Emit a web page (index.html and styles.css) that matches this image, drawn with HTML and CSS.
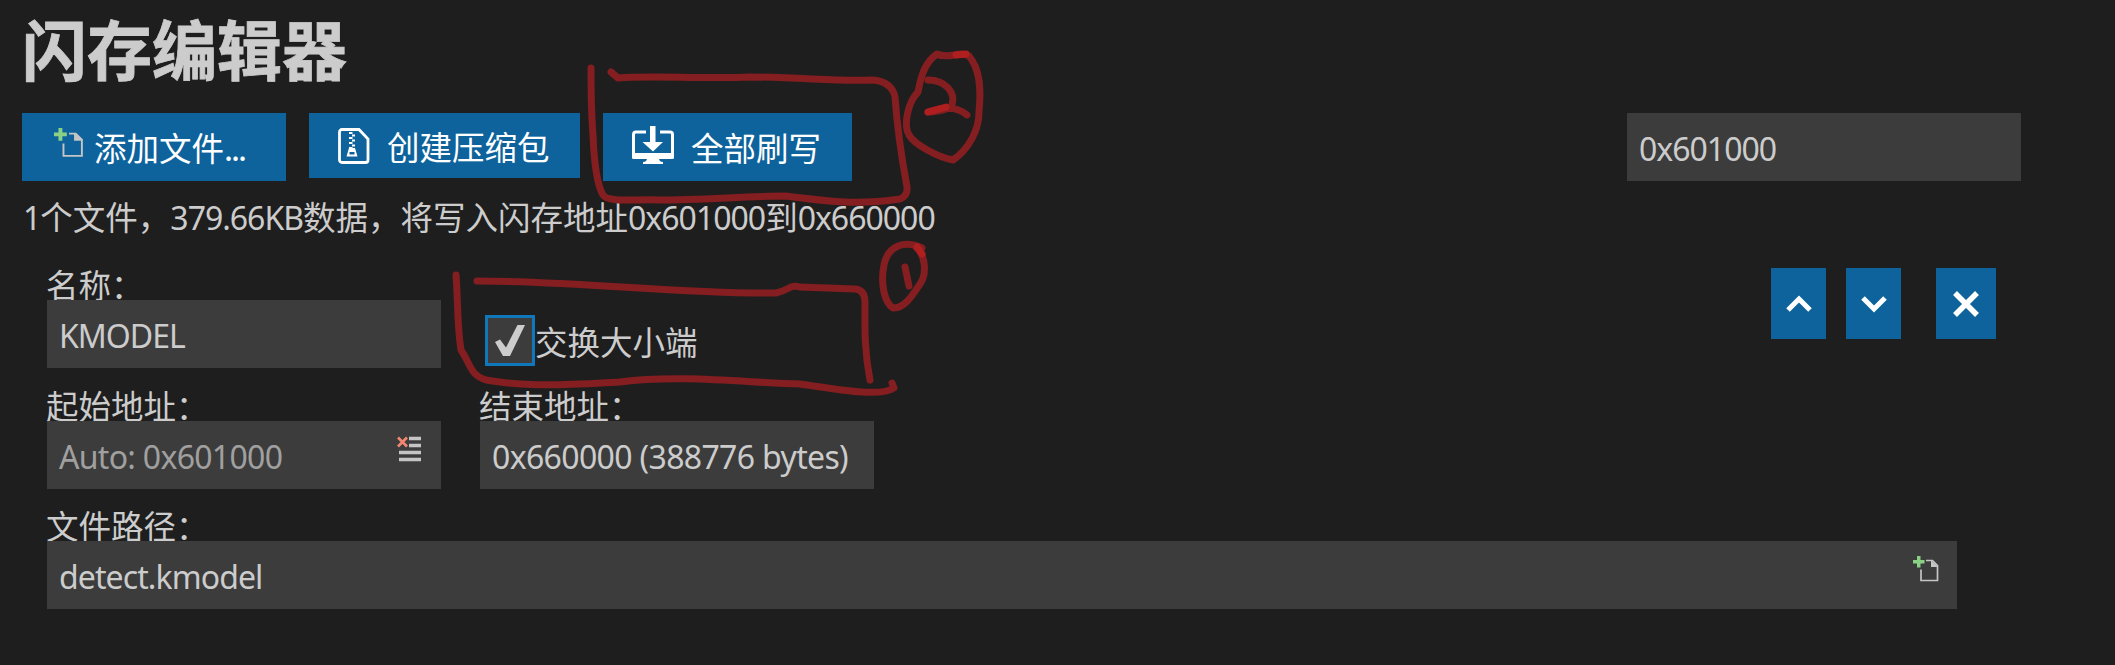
FILE: index.html
```
<!DOCTYPE html>
<html lang="zh-CN">
<head>
<meta charset="utf-8">
<title>闪存编辑器</title>
<link rel="stylesheet" href="styles.css">
</head>
<body>
<main class="editor">
  <h1 class="title">闪存编辑器</h1>
  <div class="toolbar">
    <button class="btn btn-add">
      <svg class="icon-add" width="29" height="29" viewBox="0 0 26 26"><path d="M4 0h3.500v4h4v3.500h-4v4H4v-4H0V4h4z" fill="#89d185"/><path d="M13.500 5h6l5.500 5.500v14.500H8.500V14" fill="none" stroke="#c5c5c5" stroke-width="1.700"/><path d="M18 4.300l7.800 7.200H18z" fill="#c5c5c5"/></svg>
      <span class="btn-text">添加文件<span class="dots">...</span></span>
    </button>
    <button class="btn btn-zip">
      <svg class="icon-zip" width="32" height="36" viewBox="0 0 32 36"><path d="M4 1.500H21L30 11V32a2.500 2.500 0 0 1-2.500 2.500H4A2.500 2.500 0 0 1 1.500 32V4A2.500 2.500 0 0 1 4 1.500z" fill="none" stroke="#fff" stroke-width="2.800"/><path d="M11 5h3.500M14 7.500h3M11 10h3.500M14 12.500h3M11 15h3.500M14 17.500h3M11 20h3.500" stroke="#fff" stroke-width="2.200" fill="none"/><path fill-rule="evenodd" d="M11 20h6l2.500 8.500h-11zM11.500 24v2.500h5V24z" fill="#fff"/></svg>
      <span class="btn-text">创建压缩包</span>
    </button>
    <button class="btn btn-flash">
      <svg class="icon-flash" width="42" height="38" viewBox="0 0 42 38"><path d="M14 6H4a2.500 2.500 0 0 0-2.500 2.500V31h39V8.500A2.500 2.500 0 0 0 38 6H28" fill="none" stroke="#fff" stroke-width="3"/><path d="M0 27h42v4q0 2-2 2H2q-2 0-2-2zM15 32h12q0 4 4 4v2H11v-2q4 0 4-4zM18 0h5.500v16H31L21 25.500 10.500 16H18z" fill="#fff"/></svg>
      <span class="btn-text">全部刷写</span>
    </button>
    <div class="field base-address"><span class="latin">0x601000</span></div>
  </div>
  <p class="status"><span class="latin">1</span>个文件，<span class="latin">379.66KB</span>数据，将写入闪存地址<span class="latin">0x601000</span>到<span class="latin">0x660000</span></p>
  <section class="entry">
    <div class="row">
      <div class="column"><div class="label">名称：</div><div class="field"><span class="latin">KMODEL</span></div></div>
      <label class="swap"><span class="checkbox"><svg width="30" height="32" viewBox="0 0 30 32"><path d="M0 17l5-2.500 6 8L22.500 0H30L15 31H8z" fill="#ccc"/></svg></span><span>交换大小端</span></label>
      <div class="actions">
        <button class="btn move"><svg width="26" height="18" viewBox="0 0 26 18"><path d="M2 15L13 4l11 11" fill="none" stroke="#fff" stroke-width="5"/></svg></button>
        <button class="btn move"><svg width="26" height="18" viewBox="0 0 26 18"><path d="M2 3l11 11L24 3" fill="none" stroke="#fff" stroke-width="5"/></svg></button>
        <button class="btn remove"><svg width="28" height="28" viewBox="0 0 28 28"><path d="M3 3l22 22M25 3L3 25" fill="none" stroke="#fff" stroke-width="5.500"/></svg></button>
      </div>
    </div>
    <div class="row row-address">
      <div class="column"><div class="label">起始地址：</div><div class="field muted"><span class="latin auto">Auto: 0x601000</span><svg class="icon-clear" width="24" height="26" viewBox="0 0 24 26"><path d="M1 1.500l9 9M10 1.500l-9 9" stroke="#f48771" stroke-width="2.600"/><path d="M12 2.500h12M12 9.500h12M2 16.500h22M2 23.500h22" stroke="#c5c5c5" stroke-width="3.600"/></svg></div></div>
      <div class="column end"><div class="label">结束地址：</div><div class="field"><span class="latin end-text">0x660000 (388776 bytes)</span></div></div>
    </div>
    <div class="row">
      <div class="column path"><div class="label">文件路径：</div><div class="field"><span class="latin path-text">detect.kmodel</span><svg class="icon-pick" width="26" height="26" viewBox="0 0 26 26"><path d="M4 0h3.500v4h4v3.500h-4v4H4v-4H0V4h4z" fill="#89d185"/><path d="M13 4.500h6.500l5 5V24.500H8V13.500" fill="none" stroke="#c5c5c5" stroke-width="1.700"/><path d="M18 4l7.300 7H18z" fill="#c5c5c5"/></svg></div></div>
    </div>
  </section>
  <svg class="ink" width="2115" height="665" viewBox="0 0 2115 665">
    <path d="M591 68C591 90 591 110 593 135C594 160 597 185 603 195C608 203 635 199 660 200C700 200 750 196 785 196C820 200 850 206 900 199Q908 196 907 187C902 160 897 125 895 97Q892 82 873 80C840 82 800 77 750 77C700 79 650 75 618 78L611 72"/>
    <path d="M937 54C925 62 921 76 918 92C908 102 903 125 909 135C914 144 937 157 953 160C969 149 979 130 979 112C981 92 981 70 969 56C960 50 949 60 937 54z"/>
    <path d="M928 80C945 80 956 92 952 105Q948 111 928 112Q954 103 967 115"/>
    <path d="M456 275C458 300 457 325 461 350C471 365 470 375 486 380C530 388 580 384 620 382C680 374 750 383 800 384C830 388 880 398 894 388L892 383M477 281C580 281 680 294 776 293C790 290 790 284 800 287L855 289Q865 290 865 302C865 325 864 350 870 380"/>
    <path d="M922 248C905 240 888 245 884 265C880 285 885 303 893 308C904 309 912 296 920 284C927 274 926 255 915 246"/>
    <path d="M905 267L909 286"/>
    <path class="ink-strong" d="M956 55L966 54M928 112L946 107M917 247L922 254"/>
  </svg>
</main>
</body>
</html>
```
FILE: styles.css
```
* { box-sizing: border-box; }
body {
  margin: 0;
  background: #1e1e1e;
  color: #ccc;
  font-family: "Noto Sans CJK SC", sans-serif;
  font-size: 32.5px;
  line-height: 48px;
}
.editor { position: relative; width: 2115px; height: 665px; overflow: hidden; }
.title { margin: 0; padding: 0 0 0 22px; height: 113px; font-size: 65px; line-height: 94px; font-weight: 700; -webkit-text-stroke: 0.8px #ccc; }
.toolbar { display: flex; align-items: flex-start; padding-left: 22px; height: 79px; }
.btn {
  display: flex; align-items: center; flex: none;
  margin: 0; padding: 0; border: 0;
  background: #0e639c; color: #fff;
  font: inherit; height: 68px;
}
.btn svg { display: block; flex: none; }
.btn-add { width: 264px; padding-left: 32px; }
.btn-zip { width: 271px; height: 65px; margin-left: 23px; padding-left: 29px; }
.btn-flash { width: 249px; margin-left: 23px; padding-left: 29px; }
.btn-add .icon-add { margin-bottom: 9px; }
.btn-flash .icon-flash { margin-bottom: 4px; }
.btn-add .btn-text { margin-left: 11px; }
.btn-zip .btn-text { margin-left: 17px; }
.btn-flash .btn-text { margin-left: 17px; }
.dots { letter-spacing: -2px; }
.latin { font-family: "Noto Sans", sans-serif; font-size: 32px; letter-spacing: -1px; }
.field { display: flex; align-items: center; position: relative; width: 394px; height: 68px; padding: 3px 0 0 12px; background: #3c3c3c; white-space: pre; }
.base-address { margin-left: 775px; }
.status { margin: 0; padding-left: 23px; height: 76px; line-height: 47px; white-space: nowrap; }
.entry { padding-left: 47px; }
.row { display: flex; height: 121px; align-items: flex-start; }
.row-address { height: 120px; }
.label { height: 48px; margin: -8px 0 -8px -1px; }
.swap { display: flex; align-items: center; margin: 47px 0 0 44px; height: 51px; width: 300px; }
.checkbox { display: flex; align-items: center; justify-content: center; width: 50px; height: 51px; border: 3px solid #1177bb; background: #3c3c3c; }
.actions { display: flex; margin-left: 986px; }
.actions .btn { justify-content: center; height: 71px; }
.move { width: 55px; }
.move + .move { margin-left: 20px; }
.actions .remove { width: 60px; margin-left: 35px; }
.end { margin-left: 39px; }
.muted { color: #a0a0a0; }
.auto { letter-spacing: -0.7px; }
.end-text { letter-spacing: -0.65px; }
.path-text { letter-spacing: -0.9px; }
.path .field { width: 1910px; }
.icon-clear { position: absolute; right: 20px; top: 15px; }
.icon-pick { position: absolute; right: 18px; top: 15px; }
.ink { position: absolute; left: 0; top: 0; fill: none; stroke: #841e20; stroke-width: 7; stroke-linecap: round; stroke-linejoin: round; pointer-events: none; }
.ink-strong { stroke: #b01f20; }
```
